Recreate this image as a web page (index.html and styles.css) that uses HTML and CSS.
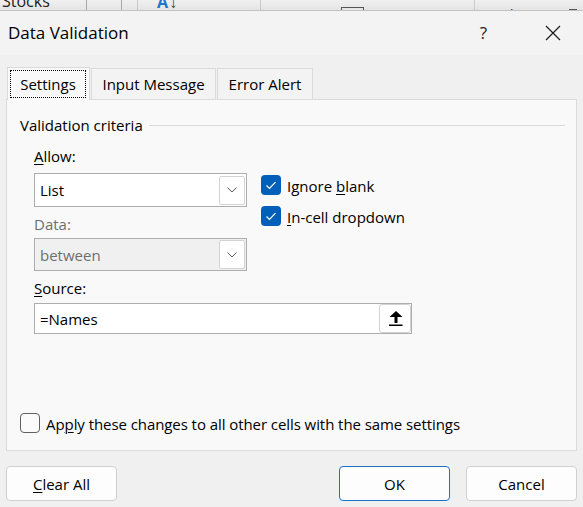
FILE: index.html
```html
<!DOCTYPE html>
<html>
<head>
<meta charset="utf-8">
<link rel="stylesheet" href="styles.css">
</head>
<body>
<div class="ribbon">
  <div class="rcell c1"><span class="rtext-low">Stocks</span></div>
  <div class="rcell c2"></div>
  <div class="rcell c3"></div>
  <div class="rcell c4"><span class="sort"><span class="sort-a">A</span><span class="sort-arrow">↓</span></span></div>
  <div class="rcell c5"><span class="rbox"></span></div>
  <div class="rcell c6"><span class="rtext-high">Cal</span><span class="rdash"></span></div>
</div>
<div class="dialog">
  <div class="titlebar">
    <span class="title">Data Validation</span>
    <span class="help">?</span>
    <svg class="close" width="16" height="16" viewBox="0 0 16 16"><path d="M1 1 L15 15 M15 1 L1 15" stroke="#1b1b1b" stroke-width="1.2" fill="none"/></svg>
  </div>
  <div class="tabs">
    <div class="tab tab-settings active"><span class="focus">Settings</span></div>
    <div class="tab tab-input">Input Message</div>
    <div class="tab tab-error">Error Alert</div>
  </div>
  <div class="panel">
    <div class="group-head"><span>Validation criteria</span><span class="group-line"></span></div>
    <div class="form">
      <div class="top">
        <div class="leftcol">
          <div class="label label-allow"><u>A</u>llow:</div>
          <div class="combo combo-allow"><span class="combo-text">List</span><span class="drop"><svg width="10" height="6" viewBox="0 0 10 6"><path d="M0.5 0.5 L5 5 L9.5 0.5" stroke="#5c5c5c" stroke-width="1" fill="none"/></svg></span></div>
          <div class="label label-data disabled">Data:</div>
          <div class="combo combo-data disabled-box"><span class="combo-text">between</span><span class="drop"><svg width="10" height="6" viewBox="0 0 10 6"><path d="M0.5 0.5 L5 5 L9.5 0.5" stroke="#5c5c5c" stroke-width="1" fill="none"/></svg></span></div>
        </div>
        <div class="rightcol">
          <div class="check-row">
            <span class="cb checked"><svg width="20" height="20" viewBox="0 0 20 20"><path d="M5.5 10.5 L8.5 13.5 L14.5 7.2" stroke="#fff" stroke-width="1.2" fill="none"/></svg></span>
            <span class="cb-label">Ignore <u>b</u>lank</span>
          </div>
          <div class="check-row">
            <span class="cb checked"><svg width="20" height="20" viewBox="0 0 20 20"><path d="M5.5 10.5 L8.5 13.5 L14.5 7.2" stroke="#fff" stroke-width="1.2" fill="none"/></svg></span>
            <span class="cb-label"><u>I</u>n-cell dropdown</span>
          </div>
        </div>
      </div>
      <div class="label label-source"><u>S</u>ource:</div>
      <div class="source">
        <span class="source-text">=Names</span>
        <span class="collapse"><svg width="14" height="17" viewBox="0 0 14 17"><path d="M7 1 L0.5 7 L5.5 7 L5.5 13 L8.5 13 L8.5 7 L13.5 7 Z" fill="#000"/><rect x="0" y="14.5" width="13.5" height="1.5" fill="#000"/></svg></span>
      </div>
    </div>
    <div class="apply-row">
      <span class="cb empty"></span>
      <span class="cb-label apply-text">Ap<u>p</u>ly these changes to all other cells with the same settings</span>
    </div>
  </div>
  <div class="footer">
    <button class="btn"><u>C</u>lear All</button>
    <button class="btn btn-ok">OK</button>
    <button class="btn btn-cancel">Cancel</button>
  </div>
</div>
</body>
</html>
```
FILE: styles.css
```css
* { box-sizing: border-box; }
html, body { margin: 0; padding: 0; }
body {
  width: 583px;
  height: 507px;
  overflow: hidden;
  font-family: "Open Sans", "Noto Sans", sans-serif;
  font-size: 15px;
  line-height: 20px;
  color: #000;
  background: #f0f0f0;
}
u { text-decoration-thickness: 1px; text-underline-offset: 2px; }

/* Excel ribbon fragment behind the dialog */
.ribbon {
  height: 11px;
  display: flex;
  overflow: hidden;
  background: linear-gradient(#f0f0f0, #e4e4e4);
  border-bottom: 1px solid #c2c2c2;
}
.rcell {
  flex: none;
  height: 100%;
  overflow: hidden;
  border-right: 1px solid #a9a9a9;
  display: flex;
  align-items: flex-start;
}
.c1 { width: 87px; padding-left: 2px; }
.c2 { width: 35px; }
.c3 { width: 16px; border-right-color: #c9c9c9; }
.c4 { width: 123px; padding-left: 19px; border-right-color: #c9c9c9; }
.c5 { width: 214px; padding-left: 80px; border-right-color: #c9c9c9; }
.c6 { flex: 1; border-right: none; padding-left: 17px; }
.rtext-low { display: block; margin-top: -9px; font-size: 16px; color: #222; }
.rtext-high { display: block; margin-top: 4px; font-size: 15px; color: #333; }
.rdash { display: block; width: 8px; height: 1px; margin: 9px 0 0 55px; background: #555; }
.sort { display: flex; margin-top: -8px; font-size: 16px; font-weight: 700; }
.sort-a { color: #1e78c8; }
.sort-arrow { color: #444; font-weight: 400; margin-left: 1px; font-size: 17px; }
.rbox { display: block; width: 23px; height: 8px; margin-top: 7px; border: 1px solid #555; border-bottom: none; }

/* Dialog */
.titlebar {
  height: 44px;
  display: flex;
  align-items: center;
  padding-left: 8px;
  background: #f3f3f3;
}
.title { flex: 1; font-size: 17px; }
.help { font-size: 17px; margin-right: 58px; color: #1b1b1b; }
.close { margin-right: 22px; flex: none; }

.tabs {
  margin-top: 12px;
  height: 33px;
  padding-left: 7px;
  display: flex;
  align-items: flex-end;
  gap: 1px;
  position: relative;
  z-index: 1;
  margin-bottom: -1px;
}
.tab {
  height: 31px;
  margin-bottom: 1px;
  border: 1px solid #dadada;
  border-bottom: none;
  background: #f3f3f3;
  display: flex;
  align-items: center;
  justify-content: center;
  flex: none;
}
.tab-settings { width: 83px; }
.tab-input { width: 125px; }
.tab-error { width: 96px; }
.tab.active {
  height: 33px;
  margin-bottom: 0;
  background: #f9f9f9;
  padding: 2px 3px 2px 2px;
  align-items: stretch;
}
.focus {
  flex: 1;
  border: 1px dotted #000;
  display: flex;
  align-items: center;
  justify-content: center;
}

.panel {
  margin: 0 6px;
  height: 352px;
  border: 1px solid #dcdcdc;
  background: #f9f9f9;
  display: flex;
  flex-direction: column;
  padding: 15px 11px 17px 13px;
}
.group-head { display: flex; align-items: center; height: 20px; }
.group-line { flex: 1; height: 1px; background: #d9d9d9; margin-left: 6px; }

.form { margin-left: 14px; display: flex; flex-direction: column; }
.top { display: flex; gap: 14px; }
.leftcol { width: 213px; display: flex; flex-direction: column; }
.label { height: 20px; }
.label-allow { margin-top: 11px; }
.label-data { margin-top: 7px; }
.label-source { margin-top: 7px; }
.disabled { color: #6e6e6e; }

.combo {
  height: 34px;
  margin-top: 7px;
  border: 1px solid #adadad;
  background: #fff;
  display: flex;
  align-items: center;
  padding-left: 5px;
}
.combo-data { height: 33px; margin-top: 4px; }
.disabled-box { background: #f0f0f0; color: #6e6e6e; }
.combo-text { flex: 1; }
.drop {
  width: 26px;
  height: 29px;
  margin-right: 1px;
  border: 1px solid #d3d3d3;
  border-radius: 2px;
  background: #fff;
  display: flex;
  align-items: center;
  justify-content: center;
}

.rightcol { margin-top: 40px; display: flex; flex-direction: column; gap: 11px; }
.check-row { display: flex; align-items: center; gap: 6px; height: 20px; }
.cb {
  width: 20px;
  height: 20px;
  border-radius: 4px;
  flex: none;
  display: block;
}
.cb svg { display: block; }
.cb.checked { background: #005fb8; }
.cb.empty { border: 1px solid #616161; background: #fbfbfb; }
.cb-label { padding-top: 1px; }
.apply-text { letter-spacing: -0.07px; }

.source {
  width: 378px;
  height: 31px;
  margin-top: 5px;
  border: 1px solid #adadad;
  background: #fff;
  display: flex;
  align-items: center;
  padding-left: 5px;
}
.source-text { flex: 1; }
.collapse {
  width: 32px;
  height: 29px;
  border: 1px solid #d3d3d3;
  border-radius: 3px;
  background: #fff;
  display: flex;
  align-items: center;
  justify-content: center;
}
.collapse svg { display: block; margin-left: 1px; }

.apply-row { margin-top: auto; display: flex; align-items: center; gap: 6px; height: 20px; }

.footer {
  margin-top: 15px;
  padding: 0 6px;
  display: flex;
  gap: 16px;
}
.btn {
  width: 111px;
  height: 35px;
  border: 1px solid #d0d0d0;
  border-radius: 4px;
  background: #fdfdfd;
  font: inherit;
  color: #000;
  padding: 0;
}
.btn-ok { margin-left: auto; border-color: #1a73c7; }
```
